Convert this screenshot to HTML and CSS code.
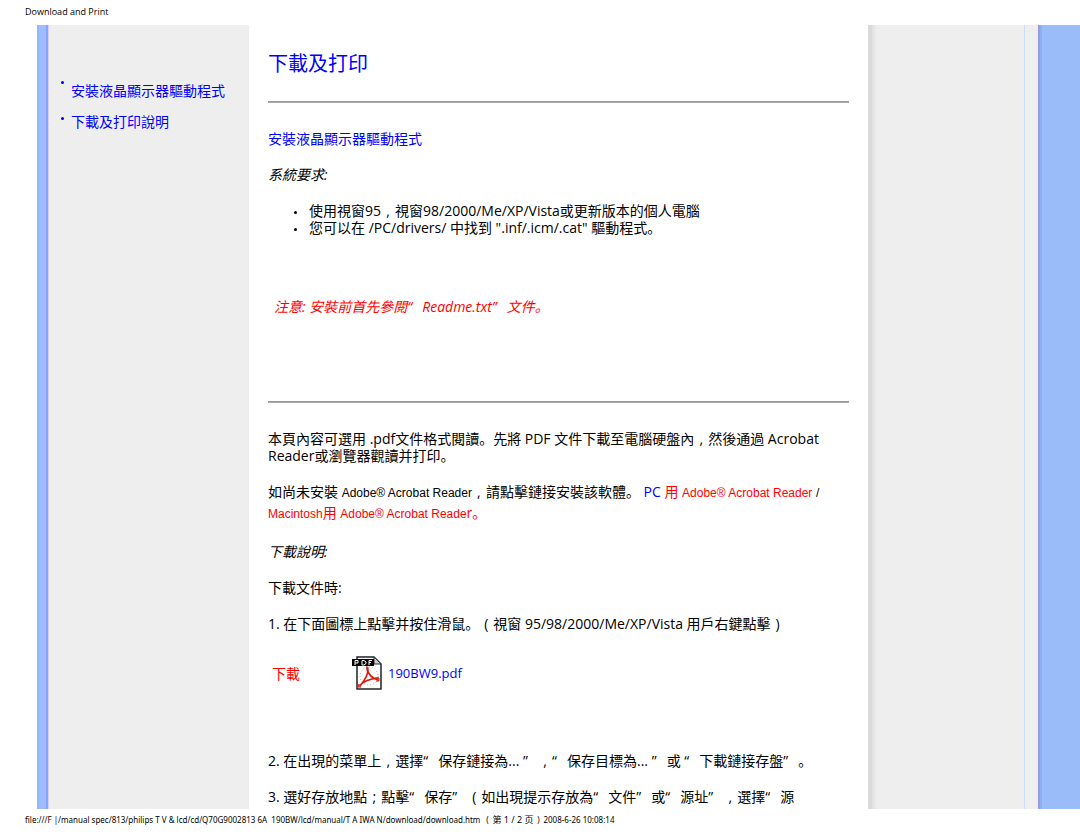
FILE: index.html
```html
<!DOCTYPE html>
<html lang="zh-CN">
<head>
<meta charset="utf-8">
<title>Download and Print</title>
<link rel="stylesheet" href="styles.css">
</head>
<body>
<header class="running">Download and Print</header>
<div class="page">
  <nav class="side">
    <ul class="menu">
      <li><span class="dot dot-high"></span><a href="#install">安裝液晶顯示器驅動程式</a></li>
      <li><span class="dot"></span><a href="#download">下載及打印說明</a></li>
    </ul>
  </nav>
  <main class="content">
    <h1>下載及打印</h1>
    <hr>
    <h2 id="install">安裝液晶顯示器驅動程式</h2>
    <p class="term">系統要求:</p>
    <ul class="specs">
      <li>使用視窗95<span class="mid">,</span>視窗98/2000/Me/XP/Vista或更新版本的個人電腦</li>
      <li>您可以在 /PC/drivers/ 中找到 ".inf/.icm/.cat" 驅動程式。</li>
    </ul>
    <p class="note">注意: 安裝前首先參閱<span class="quote">“</span>Readme.txt<span class="quote">”</span>文件。</p>
    <hr>
    <p>本頁內容可選用 .pdf文件格式閱讀。先將 PDF 文件下載至電腦硬盤內<span class="mid">,</span>然後通過 Acrobat Reader或瀏覽器觀讀并打印。</p>
    <p class="reader">如尚未安裝 <span class="arial">Adobe® Acrobat Reader</span><span class="mid">,</span>請點擊鏈接安裝該軟體。 <a href="#pc">PC</a> <a class="red" href="#pc">用 <span class="arial">Adobe® Acrobat Reader</span></a> <span class="arial">/</span> <a class="red" href="#mac"><span class="arial">Macintosh</span>用 <span class="arial">Adobe® Acrobat Reade</span>r。</a></p>
    <p class="term" id="download">下載說明:</p>
    <p>下載文件時:</p>
    <p>1. 在下面圖標上點擊并按住滑鼠。<span class="mid">(</span>視窗 95/98/2000/Me/XP/Vista 用戶右鍵點擊<span class="mid">)</span></p>
    <div class="file">
      <span class="red">下載</span>
      <a href="#pdf">
        <svg width="30" height="34" viewBox="0 0 30 34" aria-hidden="true">
          <path d="M5 1H22L29 8V33H5Z" fill="#fff" stroke="#222" stroke-width="1.5"/>
          <path d="M22 1V8H29Z" fill="#ccc" stroke="#333"/>
          <circle cx="17" cy="20" r="9" fill="none" stroke="#b5a06a" stroke-dasharray="1 2"/>
          <path d="M15 13C16 17 19 22 26 24M15 12C18 17 12 25 8 30M8 29C12 25 18 23 26 22" fill="none" stroke="#d81c12" stroke-width="1.7" stroke-linecap="round"/>
          <path d="M14 11H16V15M7 28L6 31H9M23 22H27V25H24" fill="none" stroke="#d81c12" stroke-width="1"/>
          <path d="M0 3H22V10H0Z" fill="#000"/>
          <path d="M3 9V4.500H6V7H3M10 4.500H12L14 6V7.500L12 9H10ZM17 9V4.500H20M17 6.500H19" fill="none" stroke="#fff"/>
        </svg>
        <span class="name">190BW9.pdf</span></a>
    </div>
    <p>2. 在出現的菜單上<span class="mid">,</span>選擇<span class="quote">“</span>保存鏈接為... <span class="quote">”</span><span class="mid">,</span><span class="quote">“</span>保存目標為... <span class="quote">”</span>或 <span class="quote">“</span>下載鏈接存盤<span class="quote">”</span>。</p>
    <p class="last">3. 選好存放地點<span class="mid">;</span>點擊<span class="quote">“</span>保存<span class="quote">”</span><span class="mid">(</span>如出現提示存放為<span class="quote">“</span>文件<span class="quote">”</span>或<span class="quote">“</span>源址<span class="quote">”</span><span class="mid">,</span>選擇<span class="quote">“</span>源</p>
  </main>
  <div class="edge"></div>
</div>
<footer class="running">file:///F |/manual spec/813/philips T V &amp; lcd/cd/Q70G9002813 6A &nbsp;190BW/lcd/manual/T A IWA N/download/download.htm <span class="cjk">(</span><span class="page-no">第 1 / 2 页</span><span class="cjk">)</span>2008-6-26 10:08:14</footer>
</body>
</html>
```
FILE: styles.css
```css
body {
  margin: 0;
  background: #fff;
  color: #000;
  font: 14px/17px "Open Sans", "Noto Sans CJK SC", sans-serif;
}
a, h1, h2 { color: #00f; text-decoration: none; }
.running { padding-left: 25px; font-size: 9px; line-height: 13px; white-space: nowrap; }
header.running { padding-top: 5px; padding-bottom: 7px; }
footer.running { padding-top: 4px; font-family: "Noto Sans", "Noto Sans CJK SC", sans-serif; font-size: 8px; }
.cjk { display: inline-block; width: 10px; text-align: center; }
.page-no { font-size: 9px; }
.page {
  display: grid;
  grid-template-columns: 212px minmax(0, 1fr) 212px;
  margin-left: 37px;
}
.side {
  background: linear-gradient(90deg, #8ebaff 0 2px, #9ebcff 2px 9px, #86a5f7 9px 11px, #d8ceff 11px 12px, #eee 12px);
}
.menu { list-style: none; margin: 0; padding: 57px 0 0 24px; }
.menu li { display: flex; gap: 7px; margin-bottom: 14px; }
.dot { width: 3px; height: 3px; margin-top: 4px; border-radius: 50%; background: #00f; }
.dot-high { margin-top: -1px; }
.content { padding: 27px 19px 0; }
h1 { margin: 0 0 25px; font-size: 20px; line-height: 24px; font-weight: 400; }
hr { height: 2px; margin: 0; border: 0; background: linear-gradient(#999 50%, #aaa 50%); }
h2 { margin: 27px 0 19px; font-size: 14px; line-height: 17px; font-weight: 400; }
p { margin: 0 0 19px; }
.term { font-style: italic; }
.specs { margin: 0 0 62px; padding: 0 0 0 41px; list-style: none; }
.specs li { display: flow-root; }
.specs li::before {
  content: "";
  float: left;
  width: 3px;
  height: 3px;
  margin: 9px 0 0 -15px;
  border-radius: 50%;
  background: #000;
}
.note { margin-bottom: 86px; padding-left: 6px; color: #f00; font-style: italic; }
hr + p { margin-top: 27px; margin-bottom: 17px; }
.reader { margin-bottom: 20px; line-height: 21px; }
.arial { font: 12px/12px "Liberation Sans", Arial, sans-serif; }
.red { color: #f00; }
.quote { display: inline-block; width: 15px; }
.mid { display: inline-block; width: 14px; text-align: center; }
.file { display: flex; align-items: center; gap: 52px; margin: 24px 0 62px; padding-left: 4px; }
.file a { display: flex; align-items: center; gap: 6px; }
.name { font-size: 13px; }
.last { margin-bottom: 4px; }
.edge {
  background: linear-gradient(90deg, #ddd 0, #d8d8d8 3px, #e4e4e4 5px, #eee 9px 156px, #c8dff8 156px 157px, #eee 157px 170px, #989ae2 170px 172px, #8eaff2 172px 174px, #9abcf9 174px);
}
```
